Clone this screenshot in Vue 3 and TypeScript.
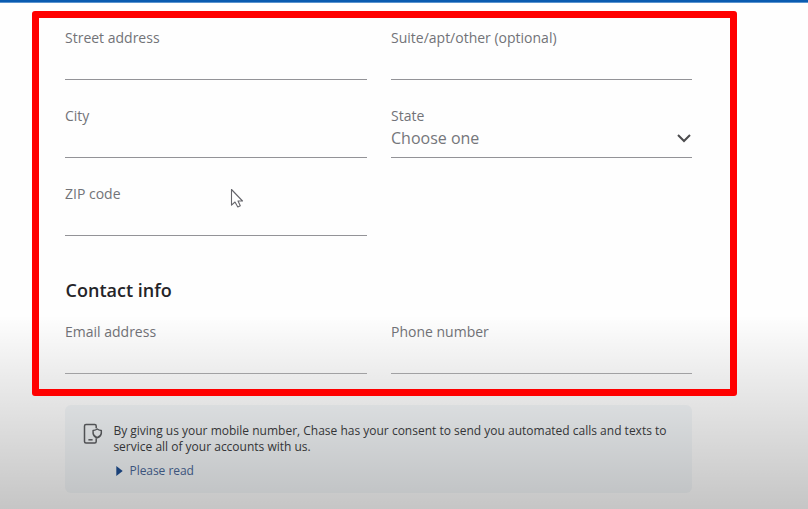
<script setup lang="ts">
interface Field {
  id: string
  label: string
  value?: string
}

const addressFields: Field[] = [
  { id: 'street', label: 'Street address' },
  { id: 'suite', label: 'Suite/apt/other (optional)' },
  { id: 'city', label: 'City' },
  { id: 'state', label: 'State', value: 'Choose one' },
  { id: 'zip', label: 'ZIP code' },
]

const contactFields: Field[] = [
  { id: 'email', label: 'Email address' },
  { id: 'phone', label: 'Phone number' },
]
</script>

<template>
  <div class="page">
    <div class="topbar"></div>
    <main class="form">
      <section class="grid">
        <div v-for="f in addressFields" :key="f.id" class="field">
          <span class="label">{{ f.label }}</span>
          <div v-if="f.value" class="select">
            <span class="value">{{ f.value }}</span>
            <svg class="chevron" width="16" height="12" viewBox="0 0 16 12">
              <path d="M2 3 L8 9 L14 3" fill="none" stroke="#4c4c4e" stroke-width="2" />
            </svg>
          </div>
        </div>
      </section>
      <h2 class="heading">Contact info</h2>
      <section class="grid contact">
        <div v-for="f in contactFields" :key="f.id" class="field">
          <span class="label">{{ f.label }}</span>
        </div>
      </section>
      <aside class="notice">
        <svg class="phone-icon" width="20" height="22" viewBox="0 0 20 22">
          <g fill="none" stroke="#5c5e61" stroke-width="1.5" stroke-linejoin="round">
            <path d="M13.2 5.2V2.9Q13.2 1.4 11.7 1.4H3Q1.5 1.4 1.5 2.9V18.6Q1.5 20.1 3 20.1H11.7Q13.2 20.1 13.2 18.6V15.2" />
            <path d="M14.2 6Q12.6 7.3 10.1 7.4V10.3Q10.4 13.2 14.2 14.8Q18 13.2 18.3 10.3V7.4Q15.8 7.3 14.2 6Z" />
            <path d="M5.4 16.8H9.6" />
          </g>
        </svg>
        <div class="copy">
          <p class="line">By giving us your mobile number, Chase has your consent to send you automated calls and texts to</p>
          <p class="line">service all of your accounts with us.</p>
          <div class="more">
            <svg width="7" height="10" viewBox="0 0 7 10"><path d="M0.3 0V10L6.7 5Z" fill="#1f4f93" /></svg>
            <a>Please read</a>
          </div>
        </div>
      </aside>
    </main>
    <div class="shade"></div>
    <div class="frame"></div>
    <svg class="cursor" width="14" height="22" viewBox="0 0 14 22">
      <path d="M1.5 1.5V17.2L5 14L7.8 19L10.3 17.7L8 13H12.5Z" fill="#fff" stroke="#66666c" stroke-width="1.1" stroke-linejoin="round" />
    </svg>
  </div>
</template>

<style>
body {
  margin: 0;
  overflow: hidden;
}
</style>

<style scoped>
.page {
  position: relative;
  box-sizing: border-box;
  width: 808px;
  height: 509px;
  overflow: hidden;
  background: #fefefe;
  font-family: 'Open Sans', 'Noto Sans', sans-serif;
}

.topbar {
  box-sizing: border-box;
  height: 3px;
  background: #0a5bb0;
  border-bottom: 1px solid #5a93cf;
}

.form {
  width: 627px;
  margin: -1px 0 0 65px;
}

.grid {
  display: grid;
  grid-template-columns: 302px 301px;
  column-gap: 24px;
}

.field {
  box-sizing: border-box;
  height: 78px;
  padding-top: 26px;
  border-bottom: 1px solid #939397;
}

.label {
  display: block;
  font-size: 14px;
  line-height: 20px;
  color: #727378;
}

.select {
  display: flex;
  align-items: center;
  justify-content: space-between;
  height: 24px;
}

.value {
  font-size: 16px;
  line-height: 24px;
  color: #75767b;
}

.chevron {
  display: block;
}

.heading {
  margin: 43px 0 0;
  height: 22px;
  padding-left: 0.6px;
  font-size: 18px;
  font-weight: 600;
  line-height: 22px;
  color: #242428;
}

.contact .field {
  height: 73px;
  padding-top: 21px;
  border-bottom-color: #adadaf;
}

.notice {
  display: flex;
  box-sizing: border-box;
  height: 88px;
  margin-top: 31px;
  padding: 18px 16px 0 18px;
  border-radius: 6px;
  background: #f4f7f9;
}

.phone-icon {
  flex: none;
}

.copy {
  margin-left: 10px;
}

.line {
  margin: 0;
  padding-left: 0.4px;
  font-size: 12px;
  line-height: 16px;
  white-space: nowrap;
  color: #3c3d41;
}

.more {
  display: flex;
  align-items: center;
  gap: 6.5px;
  height: 16px;
  margin: 8px 0 0 3px;
  font-size: 12px;
  line-height: 16px;
  letter-spacing: -0.05px;
  color: #496798;
}

.shade {
  position: absolute;
  inset: 315px 0 0;
  pointer-events: none;
  background: linear-gradient(rgba(0, 0, 0, 0), rgba(0, 0, 0, 0.07) 30%, rgba(0, 0, 0, 0.225));
}

.frame {
  position: absolute;
  box-sizing: border-box;
  left: 32px;
  top: 11px;
  width: 705px;
  height: 385px;
  border: 7px solid #f00;
  border-radius: 3px;
}

.cursor {
  position: absolute;
  left: 230px;
  top: 188px;
}
</style>
